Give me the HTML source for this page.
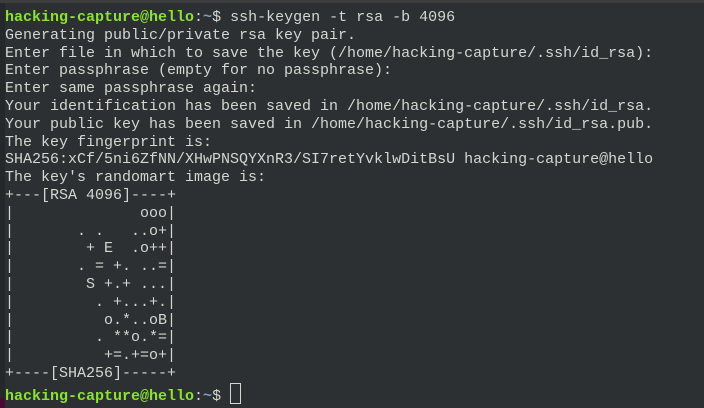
<!DOCTYPE html>
<html><head><meta charset="utf-8"><style>
html,body{margin:0;padding:0;width:704px;height:408px;overflow:hidden;background:#2c3032;}
#top{position:absolute;left:0;top:0;width:704px;height:3px;background:#3d3d3d;}
#left{position:absolute;left:0;top:3px;width:5px;height:405px;background:#24282a;}
#mag{position:absolute;left:0;top:398px;width:5px;height:10px;background:#4a0a33;}
pre{position:absolute;left:5px;top:9px;margin:0;font-family:"Liberation Mono",monospace;font-size:15px;line-height:17.8px;color:#d3d7cf;}
.g{color:#8ae234;font-weight:bold;}
.b{color:#729fcf;font-weight:bold;}
.cur{display:inline-block;border:1px solid #d3d7cf;vertical-align:-4px;box-sizing:border-box;width:11px;height:21px;line-height:0;}
</style></head><body>
<div id="top"></div><div id="left"></div><div id="mag"></div>
<pre><span class="g">hacking-capture@hello</span>:<span class="b">~</span>$ ssh-keygen -t rsa -b 4096
Generating public/private rsa key pair.
Enter file in which to save the key (/home/hacking-capture/.ssh/id_rsa):
Enter passphrase (empty for no passphrase):
Enter same passphrase again:
Your identification has been saved in /home/hacking-capture/.ssh/id_rsa.
Your public key has been saved in /home/hacking-capture/.ssh/id_rsa.pub.
The key fingerprint is:
SHA256:xCf/5ni6ZfNN/XHwPNSQYXnR3/SI7retYvklwDitBsU hacking-capture@hello
The key's randomart image is:
+---[RSA 4096]----+
|              ooo|
|       . .   ..o+|
|        + E  .o++|
|       . = +. ..=|
|        S +.+ ...|
|         . +...+.|
|          o.*..oB|
|         . **o.*=|
|          +=.+=o+|
+----[SHA256]-----+
<span class="g">hacking-capture@hello</span>:<span class="b">~</span>$ <span class="cur"></span></pre>
</body></html>
